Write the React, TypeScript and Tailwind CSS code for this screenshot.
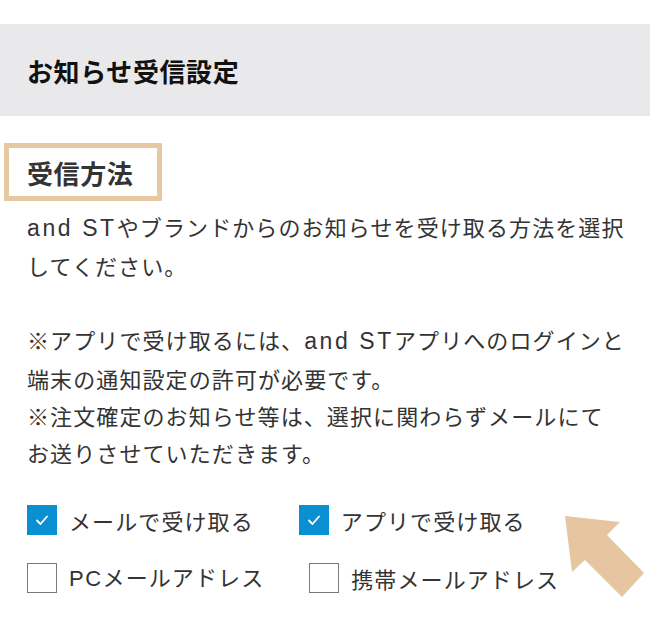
import React from "react";

const font = { fontFamily: '"Noto Sans CJK JP", "Noto Sans", sans-serif' };
const latin = { fontFamily: '"Liberation Sans", Arial, sans-serif' };

function Checkbox({ checked, label }: { checked: boolean; label: React.ReactNode }) {
  return (
    <label className="flex items-center gap-[12px]">
      {checked ? (
        <span className="flex h-[30px] w-[30px] items-center justify-center bg-[#0a8fd2]">
          <svg width="16" height="16" viewBox="0 0 16 16" fill="none">
            <polyline points="3,8.5 6.5,12 13,4.5" stroke="#fff" strokeWidth="1.8" strokeLinecap="round" strokeLinejoin="round" />
          </svg>
        </span>
      ) : (
        <span className="h-[30px] w-[30px] border-[1.5px] border-[#7a7a7a] bg-white" />
      )}
      <span className="text-[22px] leading-[30px] tracking-[1.1px] text-[#333]">{label}</span>
    </label>
  );
}

function AndSt() {
  return (
    <span className="text-[23px] tracking-[2.6px]" style={latin}>
      and ST
    </span>
  );
}

export default function App() {
  return (
    <div className="relative h-[638px] w-[650px] overflow-hidden bg-white pt-6" style={font}>
      <div className="flex h-[92px] items-center bg-[#e9e9eb] px-[27px]">
        <h1 className="text-[26px] font-bold tracking-[0.6px] text-[#111]">お知らせ受信設定</h1>
      </div>

      <div className="mt-[27px] ml-1 flex h-[58px] w-[158px] items-center border-[5px] border-[#e6c8a3] pl-[18px]">
        <h2 className="text-[26px] font-bold tracking-[0.6px] text-[#333]">受信方法</h2>
      </div>

      <p className="mt-[7px] whitespace-nowrap px-[27px] text-[22px] leading-[37px] tracking-[1.1px] text-[#333]">
        <AndSt />やブランドからのお知らせを受け取る方法を選択
        <br />
        してください。
        <br />
        <br />
        ※アプリで受け取るには、<AndSt />アプリへのログインと
        <br />
        端末の通知設定の許可が必要です。
        <br />
        ※注文確定のお知らせ等は、選択に関わらずメールにて
        <br />
        お送りさせていただきます。
      </p>

      <div className="mt-[34px] flex flex-col gap-[26px] px-[27px]">
        <div className="flex gap-[45px]">
          <Checkbox checked label="メールで受け取る" />
          <Checkbox checked label="アプリで受け取る" />
        </div>
        <div className="flex gap-[45px]">
          <Checkbox
            checked={false}
            label={
              <>
                <span className="tracking-[1.5px]" style={latin}>PC</span>メールアドレス
              </>
            }
          />
          <Checkbox checked={false} label="携帯メールアドレス" />
        </div>
      </div>

      {/* pointer arrow */}
      <svg className="absolute left-0 top-0" width="650" height="638" viewBox="0 0 650 638">
        <polygon
          points="565,516 620,522 607,535 644,573 622,597 585,560 572,572"
          fill="#e6c6a0"
        />
      </svg>
    </div>
  );
}
